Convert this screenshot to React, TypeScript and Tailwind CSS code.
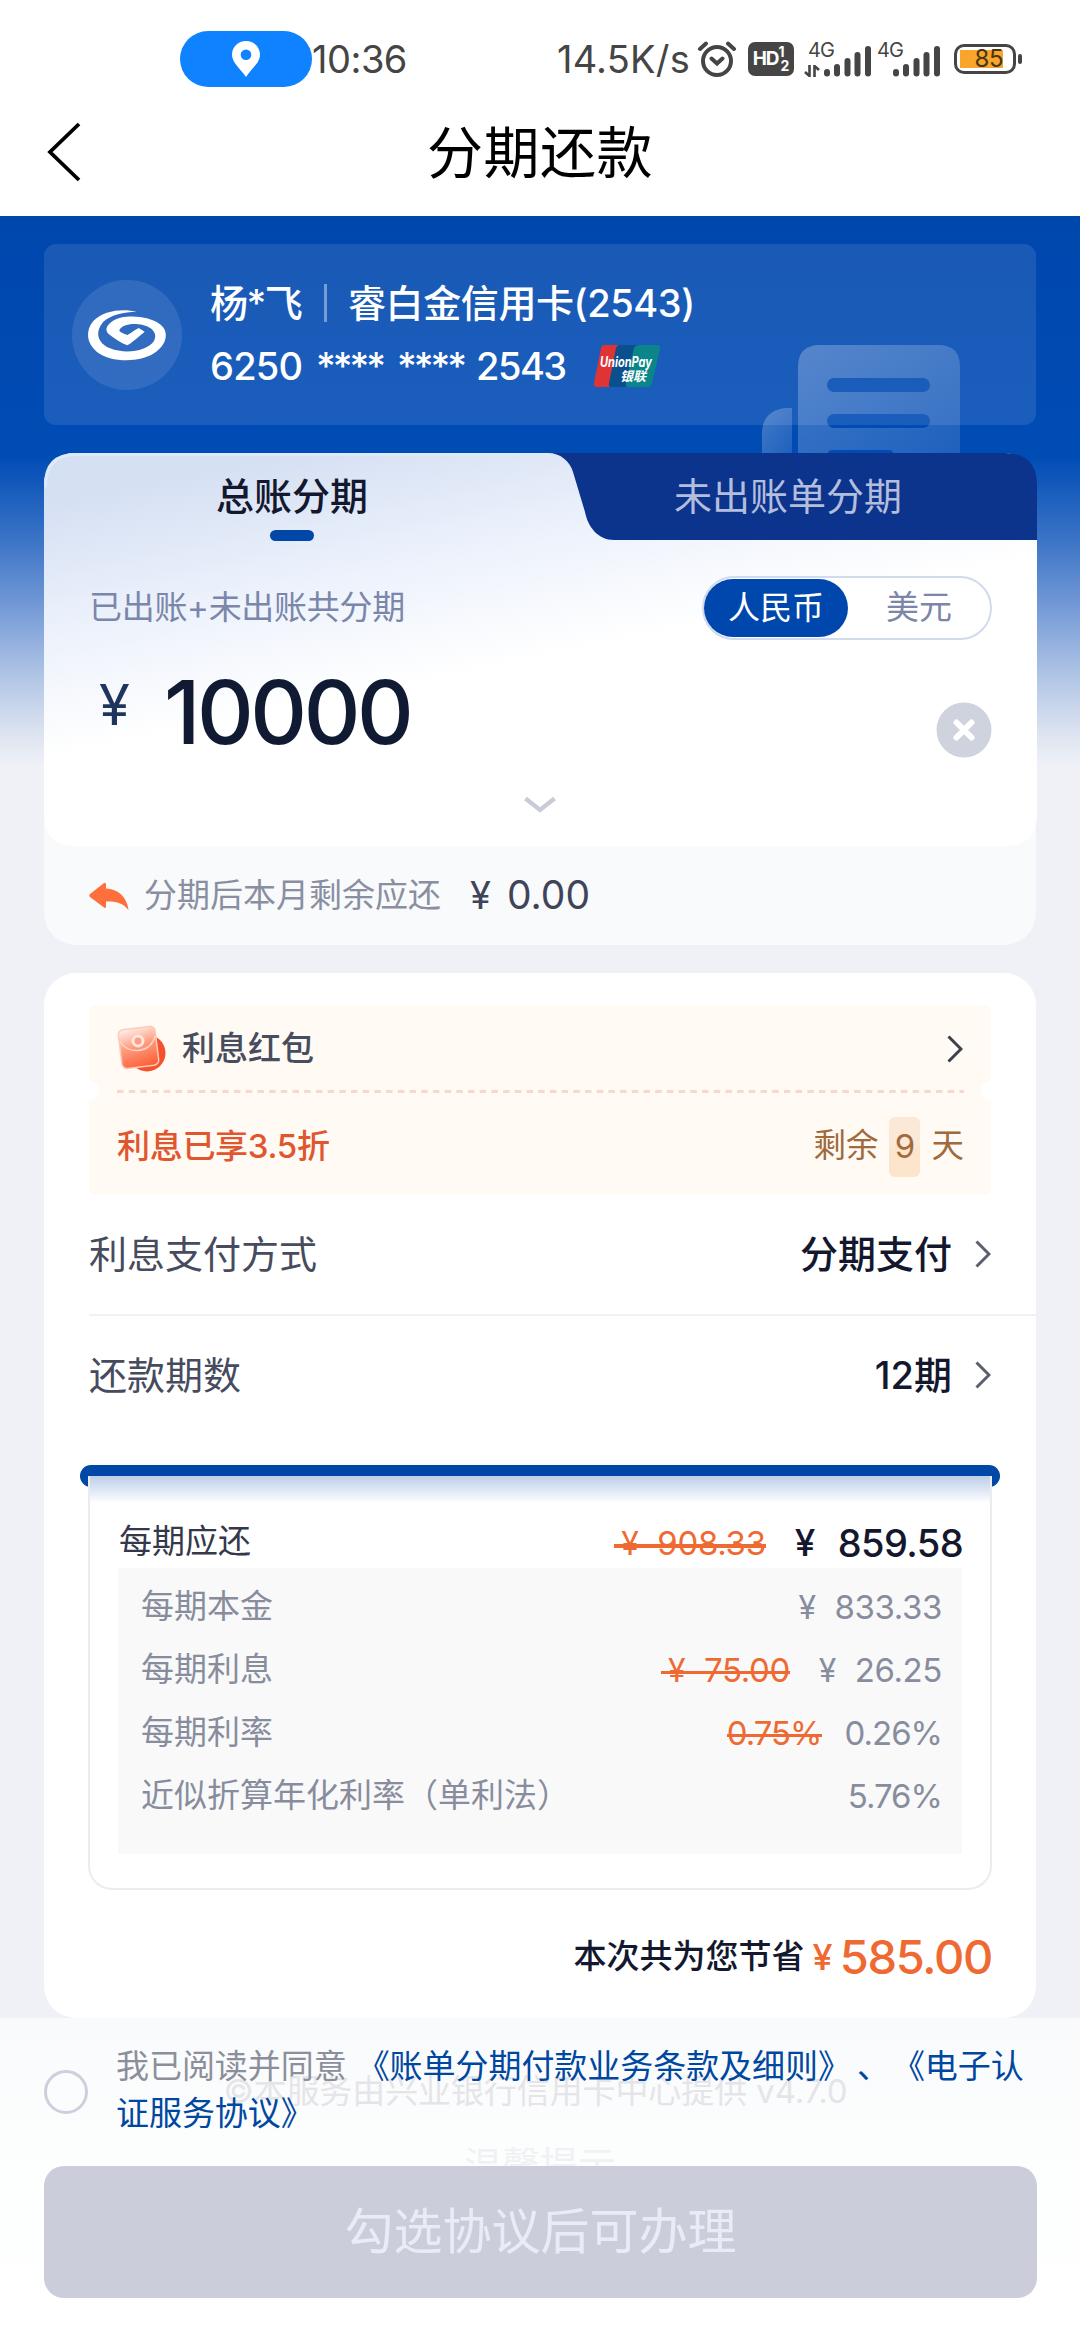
import type { ReactNode } from "react";
import clsx from "clsx";

const DETAILS = [
  { label: "每期本金", value: "833.33", yuan: true },
  { label: "每期利息", value: "26.25", yuan: true, old: "75.00", oldYuan: true },
  { label: "每期利率", value: "0.26%", old: "0.75%" },
  { label: "近似折算年化利率（单利法）", value: "5.76%" },
];

function Chevron({ className }: { className?: string }) {
  return (
    <svg viewBox="0 0 16 28" className={clsx("h-7 w-4", className)} fill="none" stroke="currentColor" strokeWidth="3">
      <path d="M1.5 1.5 L14 14 L1.5 26.5" />
    </svg>
  );
}

function Signal() {
  return (
    <svg viewBox="0 0 48 32" className="h-8 w-12" stroke="#454545" strokeWidth="6" strokeLinecap="round">
      <path d="M4 28.5V27M14 28.5V22M24.500 28.500V16M34.500 28.500V10M45 28.500V4" />
    </svg>
  );
}

function StatusBar() {
  return (
    <div className="flex h-[90px] items-center pt-[28px] text-[38px] text-[#454545]">
      <div className="ml-[180px] flex h-14 w-[132px] items-center justify-center rounded-full bg-[#0f82ff]">
        <svg viewBox="0 0 28 36" className="h-9 w-7">
          <path fill="#fff" fillRule="evenodd" d="M14 0C6.200 0 0 6 0 13.500C0 22 8 27 14 36C20 27 28 22 28 13.500C28 6 21.800 0 14 0ZM14 8.500a5.300 5.300 0 1 1 0 10.600a5.300 5.300 0 0 1 0-10.600Z" />
        </svg>
      </div>
      <span className="w-[97px] tracking-[-0.500px]">10:36</span>
      <span className="ml-[148px] w-[140px] tracking-[0.200px]">14.5K/s</span>

      {/* Alarm clock */}
      <svg viewBox="0 0 40 36" className="h-9 w-10" fill="none" stroke="#454545" strokeWidth="4" strokeLinecap="round">
        <circle cx="20" cy="20" r="14" />
        <path d="M14.500 17.500L20 22.500L25.500 17.500M3 8L9 2.500M37 8L31 2.500" />
      </svg>

      <div className="ml-[11px] flex h-[34px] w-[46px] items-center justify-center rounded-[7px] bg-[#454545] text-white">
        <span className="text-[19px] font-bold tracking-[-1px]">HD</span>
        <span className="flex flex-col text-[14px] font-bold leading-[14px]">
          <span>1</span>
          <span className="pl-0.5">2</span>
        </span>
      </div>

      <div className="relative ml-[10px] h-[36px] w-[68px]">
        <span className="absolute left-[4px] top-[-1px] text-[20px] leading-[20px] tracking-[-1px]">4G</span>
        <svg viewBox="0 0 16 12" className="absolute bottom-0 left-0 h-3 w-4" fill="none" stroke="#454545" strokeWidth="2.600">
          <path d="M1 7L5.500 11V0M15 5L10.500 1V12" />
        </svg>
        <div className="absolute bottom-0 left-[19px]">
          <Signal />
        </div>
      </div>
      <div className="relative ml-[5px] h-[36px] w-[63px]">
        <span className="absolute left-0 top-[-1px] text-[20px] leading-[20px] tracking-[-1px]">4G</span>
        <div className="absolute bottom-0 left-[15px]">
          <Signal />
        </div>
      </div>

      <div className="ml-[14px] flex h-[30px] w-[62px] items-center rounded-[10px] border-[3px] border-[#454545] pl-[3px]">
        <div className="flex h-[18px] w-[43px] items-center justify-end bg-[#f7a52b] text-[24px] tracking-[-0.500px] text-[#4a3514]">
          85
        </div>
      </div>
      <div className="ml-[2px] h-[10px] w-1 rounded-full bg-[#454545]" />
    </div>
  );
}

function TitleBar() {
  return (
    <div className="grid h-[126px] grid-cols-3 items-center">
      <svg viewBox="0 0 34 60" className="-mt-[3px] ml-[47px] h-[60px] w-[34px]" fill="none" stroke="#000" strokeWidth="3.800">
        <path d="M32 2L3 30L32 58" />
      </svg>
      <h1 className="text-center text-[56px] leading-none tracking-[0.500px] text-black">分期还款</h1>
    </div>
  );
}

function UnionPay() {
  return (
    <svg viewBox="0 0 68 42" className="h-[42px] w-[68px]">
      <path fill="#e03434" d="M11 0H30L21 42H4Q0 42 1 38L8 3Q9 0 11 0Z" />
      <path fill="#0b4f8e" d="M27 0H49L40 42H18Q15 42 16 38L23 3Q24 0 27 0Z" />
      <path fill="#0a868a" d="M47 0H64Q68 0 67 4L59 38Q58 42 54 42H35Q32 42 33 38L41 3Q42 0 47 0Z" />
      <text x="7" y="22" fill="#fff" fontSize="14" fontWeight="700" fontStyle="italic" textLength="52" lengthAdjust="spacingAndGlyphs">
        UnionPay
      </text>
      <text x="27" y="36" fill="#fff" fontSize="13" fontWeight="700" fontStyle="italic">
        银联
      </text>
    </svg>
  );
}

function BankCard() {
  return (
    <div className="flex h-[181px] items-center rounded-[12px] bg-white/10 pl-[28px] text-[38px] font-medium text-white">
      <div className="flex size-[110px] items-center justify-center rounded-full bg-white/10">
        <svg viewBox="16 0 330 300" className="h-[100px] w-[110px] shrink-0" fill="#fff">
          <path d="M210 80C170 70 110 75 80 108C55 138 60 175 90 200C130 232 215 235 262 205C300 182 310 140 280 118C250 92 170 86 138 108C118 122 115 135 125 146C145 162 165 175 182 181C200 170 222 150 234 140L216 129C205 134 195 143 182 150C174 148 163 143 158 138C160 122 190 115 215 118C255 122 275 145 262 168C240 200 175 208 130 190C90 172 85 140 110 110C135 88 170 82 210 80Z" />
        </svg>
      </div>
      <div className="ml-[28px] flex flex-col gap-[5px]">
        <div className="flex h-[58px] items-center">
          <span className="w-[92px] whitespace-nowrap tracking-[-1.500px]">杨*飞</span>
          <span className="ml-[22px] h-[38px] w-[3px] bg-white/40" />
          <span className="ml-[21px] whitespace-nowrap tracking-[-0.400px]">睿白金信用卡(2543)</span>
        </div>
        <div className="flex h-[58px] items-center">
          <span className="w-[106px] tracking-[-0.800px]">6250</span>
          <span className="w-[81px] tracking-[-3px]">****</span>
          <span className="w-[79px] tracking-[-3px]">****</span>
          <span className="w-[117px] tracking-[-1.500px]">2543</span>
          <UnionPay />
        </div>
      </div>
    </div>
  );
}

function BillWatermark() {
  return (
    <svg viewBox="0 0 200 108" className="absolute left-[762px] top-[129px] h-[108px] w-[200px]">
      <defs>
        <linearGradient id="bill" x1="0" y1="0" x2="1" y2="1">
          <stop offset="0" stopColor="#fff" stopOpacity="0.260" />
          <stop offset="1" stopColor="#fff" stopOpacity="0.120" />
        </linearGradient>
      </defs>
      <path
        fill="url(#bill)"
        fillRule="evenodd"
        d="M36 108V22Q36 0 58 0H176Q198 0 198 22V108H131Q131 105 126 105H71Q66 105 66 108ZM72 33a7 7 0 0 0 0 14H125H161a7 7 0 0 0 0-14ZM72 69a7 7 0 0 0 0 14H161a7 7 0 0 0 0-14Z"
      />
      <path fill="url(#bill)" d="M0 108V86Q2 65 24 63H30V108Z" />
    </svg>
  );
}

function TabsBackdrop() {
  return (
    <svg viewBox="0 0 993 393" className="absolute inset-0 h-[393px] w-[993px]">
      <defs>
        <linearGradient id="panel" gradientUnits="userSpaceOnUse" x1="250" y1="0" x2="300" y2="245">
          <stop offset="0" stopColor="#d5e0f3" />
          <stop offset="0.450" stopColor="#eaf0fb" />
          <stop offset="1" stopColor="#ffffff" />
        </linearGradient>
      </defs>
      <path fill="#0d348d" d="M480 0H961Q993 0 993 32V120H480Z" />
      <path
        fill="url(#panel)"
        d="M0 32Q0 0 32 0H504C516 0 526 8 529 19L541 59C544 74 554 87 570 87H993V361Q993 393 961 393H32Q0 393 0 361Z"
      />
      <path fill="none" stroke="#dceafc" strokeWidth="3" d="M1.500 34Q1.500 1.500 32 1.500H504" />
    </svg>
  );
}

function AmountCard() {
  return (
    <div className="mt-7 h-[492px] rounded-[32px] bg-[#f9fafc]">
      <div className="relative h-[393px]">
        <TabsBackdrop />
        <div className="relative">
          <div className="flex h-[87px] text-[38px]">
            <div className="flex flex-1 flex-col items-center pt-[16px] font-medium text-[#14182e]">
              <span className="leading-[54px]">总账分期</span>
              <span className="mt-[7px] h-[11px] w-11 shrink-0 rounded-full bg-[#0047a8]" />
            </div>
            <div className="flex-1 pt-[16px] text-center leading-[54px] text-[#b3bedd]">未出账单分期</div>
          </div>

          <div className="mt-[36px] flex h-16 items-center justify-between pl-[45px] pr-11 text-[33px]">
            <span className="tracking-[-0.300px] text-[#7b86ab]">已出账+未出账共分期</span>
            <div className="flex h-16 w-[290px] items-center rounded-full border-2 border-[#d0dbec] bg-white text-[#7b86a8]">
              <span className="flex h-[58px] w-[144px] items-center justify-center rounded-full bg-[#0047ad] text-[32px] text-white">
                人民币
              </span>
              <span className="flex-1 text-center">美元</span>
            </div>
          </div>

          <div className="flex h-[144px] items-start pl-[55px] pr-11 text-[#111a33]">
            <span className="mt-[32px] w-[65px] text-[56px] leading-[66px] text-[#1f355e]">¥</span>
            <span className="mt-[17px] text-[88px] font-medium leading-[110px] tracking-[-3.500px]">10000</span>
            <svg viewBox="0 0 56 56" className="ml-auto mt-[62px] size-14">
              <circle cx="28" cy="28" r="27.500" fill="#cfd3dd" />
              <path stroke="#fff" strokeWidth="6" strokeLinecap="round" d="M20.500 20.500L35.500 35.500M35.500 20.500L20.500 35.500" />
            </svg>
          </div>

          <svg viewBox="0 0 32 16" className="mx-auto mt-[13px] h-4 w-8" fill="none" stroke="#c9ccd7" strokeWidth="4.500">
            <path d="M1.500 1.500L16 13L30.500 1.500" />
          </svg>
        </div>
      </div>

      <div className="flex h-[99px] items-center pl-[45px]">
        <svg viewBox="0 0 40 28" className="h-7 w-10" fill="#ff6f3c">
          <path d="M1 12L15 1Q17 0 17 3V6.500C29 7 38 15 39.500 28C34 21 27 19 17 19.500V24Q17 27 15 25.500L1 15Q-0.500 13.500 1 12Z" />
        </svg>
        <span className="ml-[15px] w-[326px] text-[33px] text-[#898fa1]">分期后本月剩余应还</span>
        <span className="w-[37px] text-[38px] text-[#3f4558]">¥</span>
        <span className="text-[39px] text-[#3f4558]">0.00</span>
      </div>
    </div>
  );
}

function RedPacket() {
  return (
    <svg viewBox="0 0 50 48" className="h-12 w-[50px]">
      <defs>
        <linearGradient id="packet" x1="0.400" y1="0" x2="0.600" y2="1">
          <stop offset="0" stopColor="#ffe9e2" />
          <stop offset="0.450" stopColor="#ff9b7e" />
          <stop offset="1" stopColor="#fd623a" />
        </linearGradient>
      </defs>
      <circle cx="30" cy="28" r="18.500" fill="#f4512c" />
      <rect x="3" y="3" width="37" height="39" rx="5" fill="url(#packet)" stroke="#ffc9b8" strokeWidth="1.500" transform="rotate(-7 21 22)" />
      <path d="M3 16C10 30 34 29 38 11" fill="none" stroke="#ffd3c6" strokeWidth="1.500" />
      <circle cx="21" cy="16" r="5" fill="#ff9d82" stroke="#ffe6df" strokeWidth="3" />
    </svg>
  );
}

function Coupon() {
  return (
    <div className="relative mx-[45px] h-[190px] rounded-[8px] bg-[#fffaf3] px-7">
      <div className="flex h-[85px] items-center pt-[2px]">
        <RedPacket />
        <span className="ml-[15px] text-[33px] font-medium text-[#474c5f]">利息红包</span>
        <Chevron className="ml-auto text-[#3d414d]" />
      </div>
      <svg viewBox="0 0 847 3" className="h-[3px] w-[847px]">
        <path d="M0 1.500H847" stroke="#f6d9cb" strokeWidth="3" strokeDasharray="6.500 5.200" />
      </svg>
      <div className="flex h-[102px] items-center justify-between pt-[5px] text-[33px]">
        <span className="font-medium tracking-[-0.300px] text-[#e0572f]">利息已享3.5折</span>
        <div className="flex items-center text-[#a06a3c]">
          <span className="text-[32.500px]">剩余</span>
          <span className="mx-[11px] flex h-[60px] w-[31px] items-center justify-center rounded-[6px] bg-linear-to-b from-[#fbe8d6] from-50% to-[#fde5cd] to-50%">
            9
          </span>
          <span className="-mr-px text-[32.500px]">天</span>
        </div>
      </div>
      {/* Ticket notches */}
      <span className="absolute -left-[10px] top-[76px] size-[20px] rounded-full bg-white" />
      <span className="absolute -right-[10px] top-[76px] size-[20px] rounded-full bg-white" />
    </div>
  );
}

function OptionRow({ label, value }: { label: string; value: string }) {
  return (
    <div className="flex h-[119px] items-center pb-px pr-[45px] text-[38px]">
      <span className="text-[#474b5e]">{label}</span>
      <span className="ml-auto font-medium text-[#14182e]">{value}</span>
      <Chevron className="ml-[23px] text-[#5b5f6b]" />
    </div>
  );
}

function Strike({ children }: { children: ReactNode }) {
  return (
    <span className="relative flex items-center whitespace-pre text-[#ef6a32]">
      {children}
      <span className="absolute inset-x-0 top-1/2 h-[3.500px] bg-[#ef6a32]" />
    </span>
  );
}

function Yuan({ className }: { className: string }) {
  return <span className={clsx("inline-block", className)}>¥</span>;
}

function RepaymentDetails() {
  return (
    <div className="mx-9 mt-[30px]">
      <div className="relative h-[22px] rounded-[11px] bg-[#0047a8]">
        <div className="absolute left-[10px] right-[10px] top-[11px] h-[11px] bg-white" />
      </div>
      <div className="relative mx-2 -mt-[11px] h-[414px] rounded-b-[24px] border-2 border-t-0 border-[#ececef]">
        <div className="h-[27px] bg-linear-to-b from-[#bccee8] to-white" />
        <div className="mt-[14px] flex h-[50px] items-center pl-[29px] pr-[27px] text-[33px]">
          <span className="text-[#34384a]">每期应还</span>
          <div className="ml-auto translate-y-[2px]">
            <Strike>
              <Yuan className="w-[43px] pl-[7px] text-[32px]" />
              <span className="tracking-[-0.300px]">908.33</span>
            </Strike>
          </div>
          <span className="ml-[29px] flex translate-y-px items-center text-[38px] font-medium text-[#14182e]">
            <Yuan className="w-[43px] text-[37px]" />
            <span className="tracking-[-0.600px]">859.58</span>
          </span>
        </div>
        <div className="mx-[28px] mt-px h-[286px] bg-[#f9f9fa] pl-[23px] pr-[20px] pt-[7px] text-[33px] text-[#888d9d]">
          {DETAILS.map((row) => (
            <div key={row.label} className="flex h-[63px] items-center">
              <span className="whitespace-nowrap">{row.label}</span>
              <div className="ml-auto flex translate-y-px items-center">
                {row.old && (
                  <Strike>
                    {row.oldYuan && <Yuan className="w-[43px] pl-[7px] text-[32px]" />}
                    <span className={row.oldYuan ? "tracking-[-0.400px]" : "tracking-[-1px]"}>{row.old}</span>
                  </Strike>
                )}
                {row.yuan && <Yuan className="ml-[29px] w-[36px] text-[32px]" />}
                <span className={row.yuan ? "tracking-[-0.400px]" : "ml-[23px] tracking-[-1px]"}>{row.value}</span>
              </div>
            </div>
          ))}
        </div>
      </div>
    </div>
  );
}

function PlanCard() {
  return (
    <div className="mx-11 mt-7 h-[1045px] rounded-[32px] bg-white pt-[32px]">
      <Coupon />
      <div className="ml-[45px]">
        <OptionRow label="利息支付方式" value="分期支付" />
        <div className="h-0.5 bg-[#f0f1f3]" />
        <OptionRow label="还款期数" value="12期" />
      </div>
      <RepaymentDetails />
      <div className="mt-[32px] flex h-[70px] items-center justify-end pr-11 font-medium">
        <span className="text-[33px] text-[#14182e]">本次共为您节省</span>
        <span className="ml-[8px] text-[36px] text-[#ef6a32]">¥</span>
        <span className="ml-[7px] text-[47px] tracking-[-1.300px] text-[#ef6a32]">585.00</span>
      </div>
    </div>
  );
}

function BottomBar() {
  return (
    <div className="relative h-[323px] overflow-hidden bg-linear-to-b from-[#f9fafb] via-[#fdfefe] to-white">
      <div className="absolute inset-x-0 top-[50px] pr-[9px] text-center text-[33px] leading-[46px] tracking-[-0.100px] text-[#e5e5e9]">
        ©本服务由兴业银行信用卡中心提供 v4.7.0
      </div>
      <div className="absolute inset-x-0 top-[123px] h-[25px] overflow-hidden text-center text-[38px] leading-[48px] text-[#f0f1f4]">
        温馨提示
      </div>

      <div className="relative flex h-[148px] items-start pl-11">
        <span className="mt-[52px] size-11 rounded-full border-[3px] border-[#cdd0dc]" />
        <p className="ml-[28px] mt-[25px] whitespace-nowrap text-[33px] leading-[47px] tracking-[-0.050px] text-[#0047a0] [text-spacing-trim:space-all]">
          <span className="mr-[10px] text-[#8b8f9b]">我已阅读并同意</span>《账单分期付款业务条款及细则》
          <span className="ml-[6px] mr-[2px]">、</span>《电子认
          <br />
          证服务协议》
        </p>
      </div>
      <button className="relative mx-11 flex h-[132px] w-[993px] items-center justify-center rounded-[20px] bg-[#cbceda] text-[49px] text-[#e9ecf4]">
        勾选协议后可办理
      </button>
    </div>
  );
}

export default function App() {
  return (
    <div className="h-[2340px] w-[1080px] overflow-hidden bg-white font-['Inter','Noto_Sans_CJK_SC',sans-serif]">
      <StatusBar />
      <TitleBar />
      <div className="bg-[#eff1f6]">
        <div className="bg-[linear-gradient(180deg,#0047ad_0px,#004cb5_240px,#3b74c6_324px,#7399d6_390px,#b0c5e5_460px,#dbe2f0_515px,#eff1f6_550px)]">
          <div className="relative px-11 pt-7">
            <BankCard />
            <BillWatermark />
            <AmountCard />
          </div>
        </div>
        <PlanCard />
      </div>
      <BottomBar />
    </div>
  );
}
